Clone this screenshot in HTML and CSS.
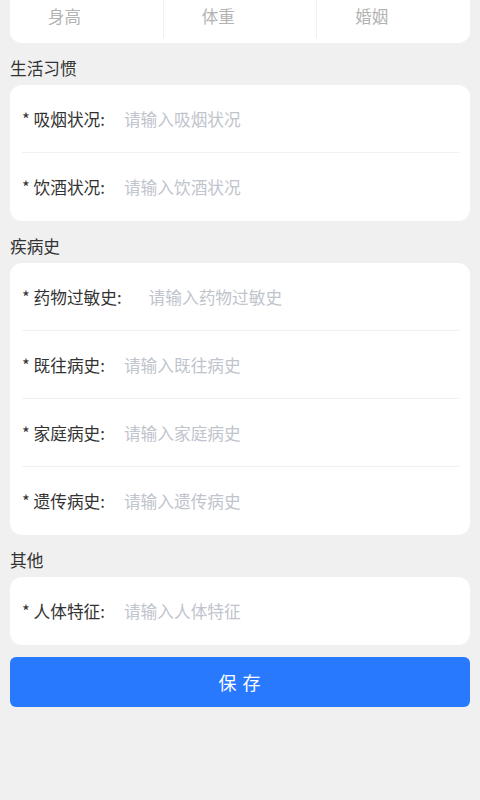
FILE: index.html
```html
<!DOCTYPE html>
<html lang="zh">
<head>
<meta charset="utf-8">
<link rel="stylesheet" href="styles.css">
</head>
<body>
<div class="page">
  <div class="card stats">
    <div class="stat">身高</div>
    <div class="stat">体重</div>
    <div class="stat">婚姻</div>
  </div>

  <div class="section-title">生活习惯</div>
  <div class="card form">
    <div class="row"><span class="label">* 吸烟状况:</span><span class="ph">请输入吸烟状况</span></div>
    <div class="row"><span class="label">* 饮酒状况:</span><span class="ph">请输入饮酒状况</span></div>
  </div>

  <div class="section-title">疾病史</div>
  <div class="card form">
    <div class="row"><span class="label wide">* 药物过敏史:</span><span class="ph">请输入药物过敏史</span></div>
    <div class="row"><span class="label">* 既往病史:</span><span class="ph">请输入既往病史</span></div>
    <div class="row"><span class="label">* 家庭病史:</span><span class="ph">请输入家庭病史</span></div>
    <div class="row"><span class="label">* 遗传病史:</span><span class="ph">请输入遗传病史</span></div>
  </div>

  <div class="section-title">其他</div>
  <div class="card form">
    <div class="row"><span class="label">* 人体特征:</span><span class="ph">请输入人体特征</span></div>
  </div>

  <button class="save">保 存</button>
</div>
</body>
</html>
```

FILE: styles.css
```css
html, body {
  margin: 0;
  padding: 0;
  background: #f0f0f0;
  font-family: "Noto Sans CJK SC", "Noto Sans", sans-serif;
  color: #333;
}
.page {
  padding: 0 10px;
  display: flex;
  flex-direction: column;
}
.card {
  background: #fff;
  border-radius: 12px;
}
.stats {
  border-radius: 0 0 12px 12px;
  display: flex;
  padding-bottom: 5px;
}
.stat {
  flex: 1;
  height: 38px;
  box-sizing: border-box;
  padding: 6px 0 0 38px;
  line-height: 20px;
  font-size: 16.5px;
  color: #b3b3b3;
  border-right: 1px solid #f0f0f0;
}
.stat:last-child {
  border-right: none;
}
.section-title {
  font-size: 16.7px;
  line-height: 20px;
  padding: 15px 0 7px 0;
  color: #333;
}
.form {
  padding: 0 11px 0 12px;
}
.row {
  height: 68px;
  box-sizing: border-box;
  display: flex;
  align-items: center;
  border-bottom: 1px solid #f1f1f1;
  font-size: 16.7px;
}
.row:last-child {
  border-bottom: none;
}
.label {
  color: #333;
  margin-right: 19px;
  white-space: nowrap;
}
.label.wide {
  margin-right: 27px;
}
.ph {
  color: #c0c4cc;
}
.save {
  margin-top: 12px;
  height: 50px;
  border: none;
  border-radius: 6px;
  background: #2979ff;
  color: #fff;
  font-family: "Noto Sans CJK SC", sans-serif;
  font-size: 18px;
  letter-spacing: 1px;
}
```
